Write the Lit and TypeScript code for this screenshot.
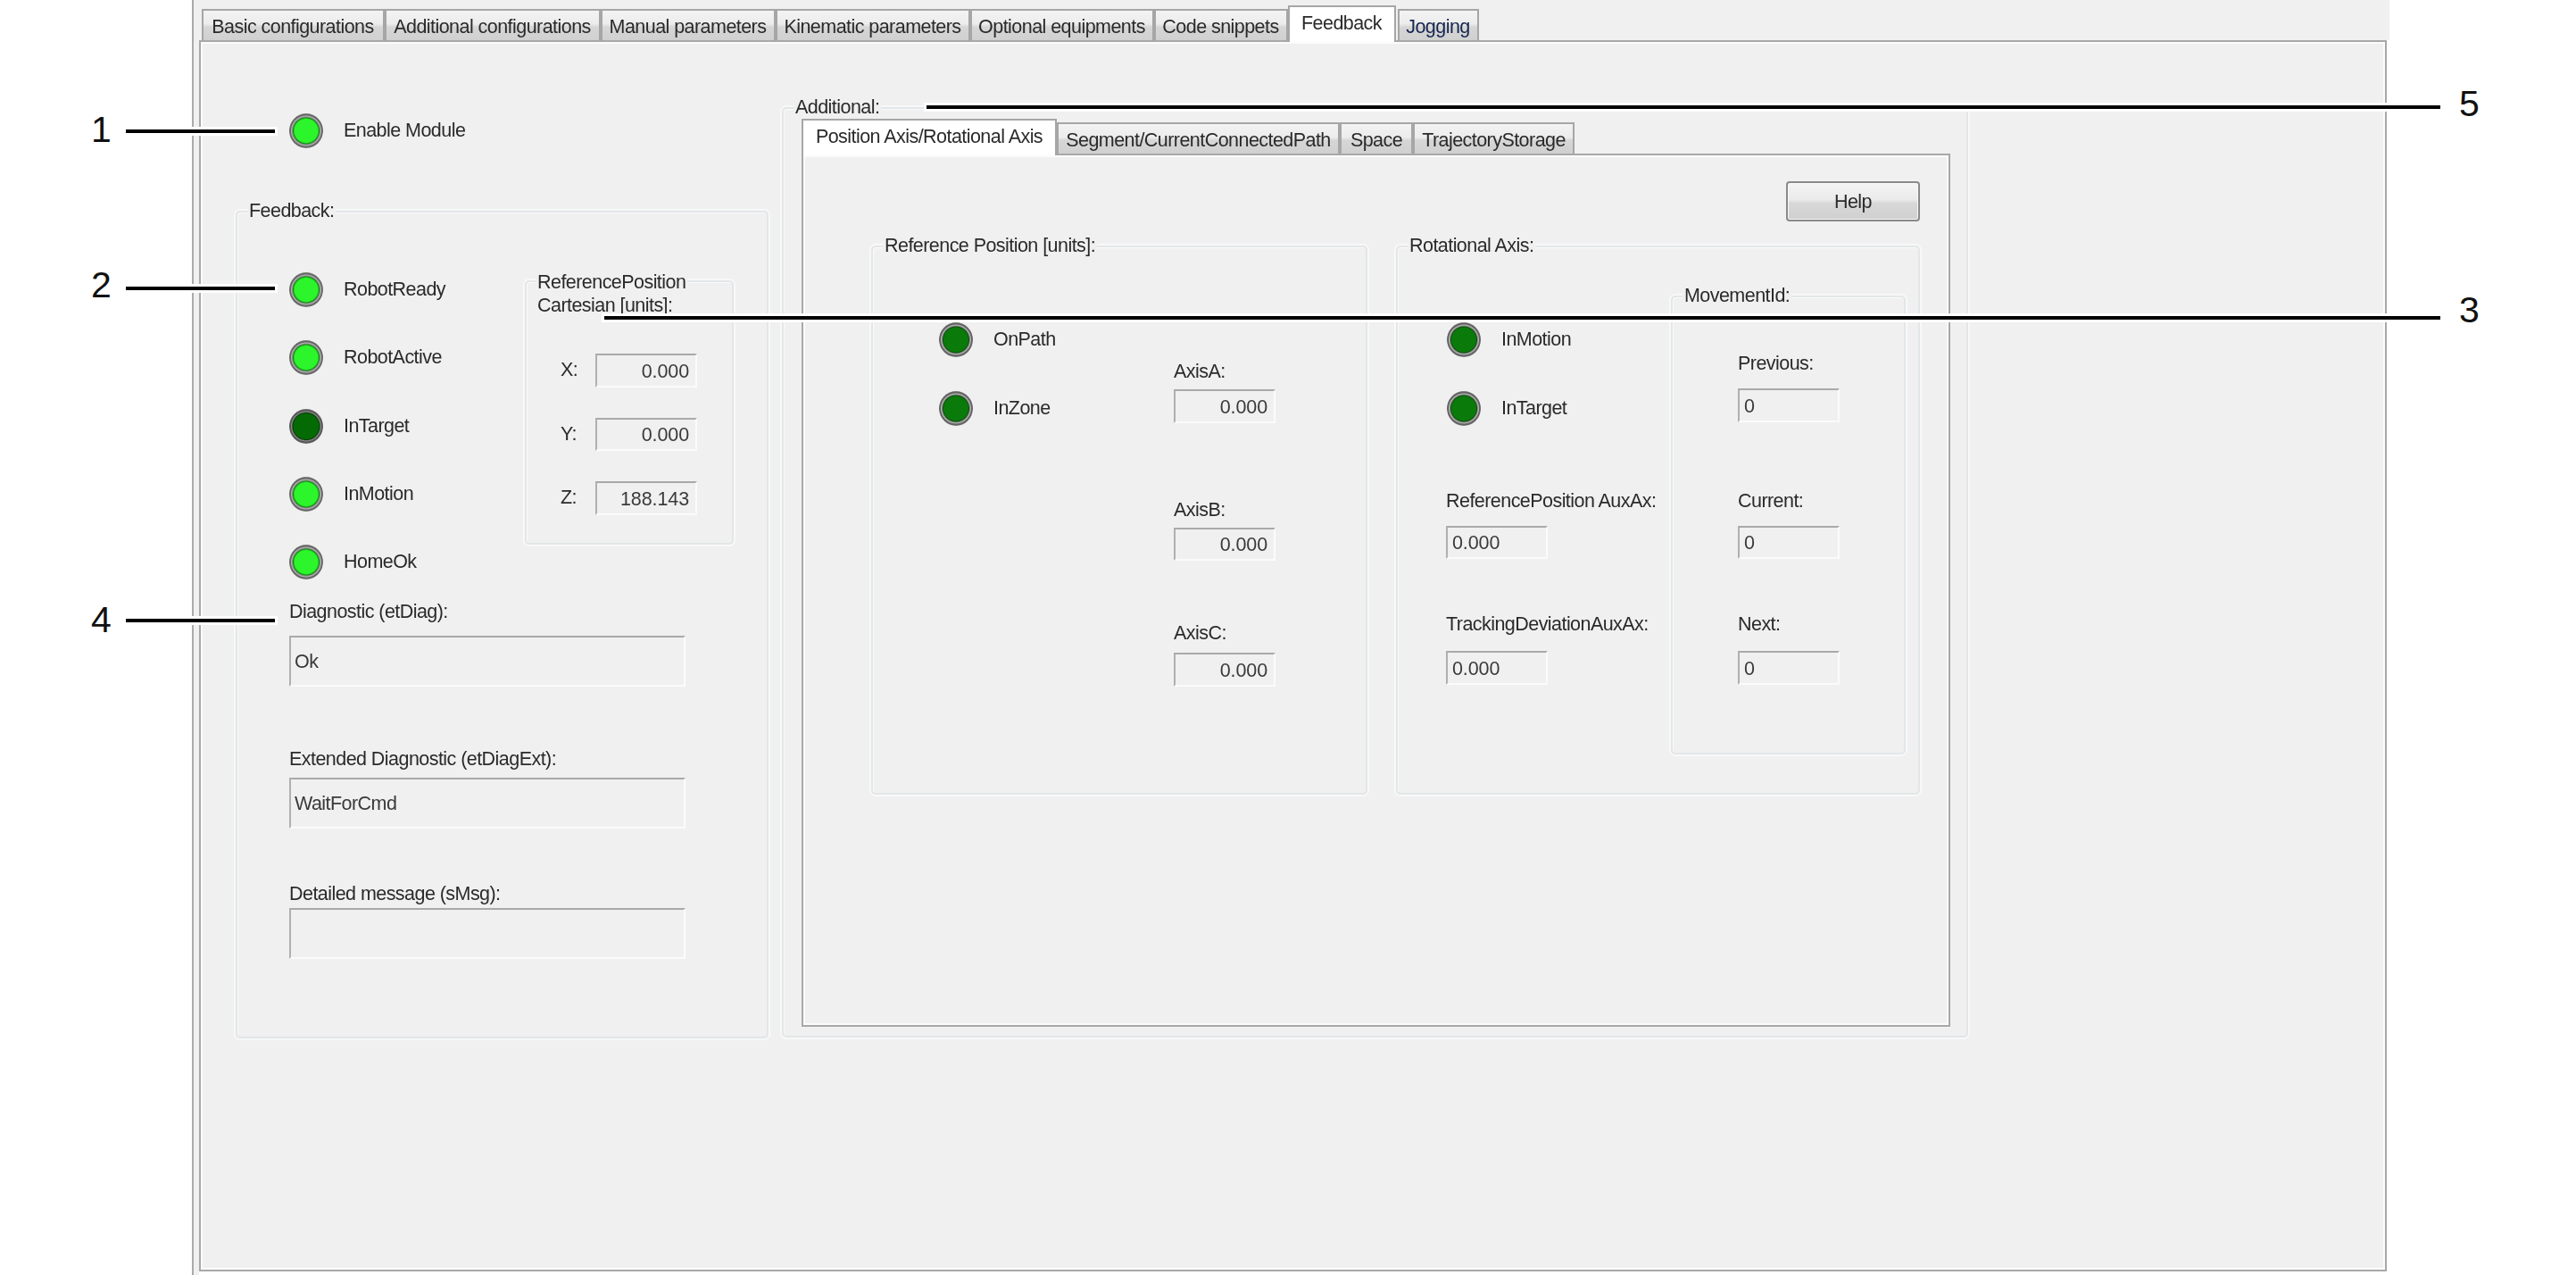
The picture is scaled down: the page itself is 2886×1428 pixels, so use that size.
import { LitElement, html, css } from "lit";
import { customElement } from "lit/decorators.js";

const mainTabs: [string, number, string?][] = [
  ["Basic configurations", 205],
  ["Additional configurations", 242],
  ["Manual parameters", 196],
  ["Kinematic parameters", 218],
  ["Optional equipments", 206],
  ["Code snippets", 150],
  ["Feedback", 121, "on"],
  ["Jogging", 91, "hot"],
];
const subTabs: [string, number, string?][] = [
  ["Position Axis/Rotational Axis", 286, "on"],
  ["Segment/CurrentConnectedPath", 317],
  ["Space", 82],
  ["TrajectoryStorage", 181],
];
const callouts = [
  { n: "1", side: "l", y: 147, cy: 145, x: 141, w: 167 },
  { n: "2", side: "l", y: 323, cy: 319, x: 141, w: 167 },
  { n: "4", side: "l", y: 695, cy: 694, x: 141, w: 167 },
  { n: "3", side: "r", y: 356, cy: 347, x: 677, w: 2057 },
  { n: "5", side: "r", y: 120, cy: 116, x: 1038, w: 1696 },
];

@customElement("app-root")
export class AppRoot extends LitElement {
  static styles = css`
    :host { display: block; position: relative; width: 2886px; height: 1428px; background: #fff; overflow: hidden;
      font-family: "Liberation Sans", Arial, sans-serif; font-size: 21.5px; letter-spacing: -0.55px; color: #2a2a2a; }
    * { box-sizing: border-box; }
    .win { margin-left: 215px; width: 2459px; height: 1428px; border-left: 2px solid #aaa; padding-left: 6px;
      background: linear-gradient(to right, #f0f0f0 6px, #fff 6px); filter: blur(0.55px); }
    .strip { height: 45px; margin: 0 -3px 0 -6px; background: #f0f0f0; padding-left: 8.5px;
      display: flex; align-items: flex-end; position: relative; z-index: 1; }
    .tab { height: 35px; display: flex; align-items: center; justify-content: center; white-space: nowrap;
      border: 2px solid #a6a6a6; border-bottom: none; padding-top: 4px;
      background: linear-gradient(#f3f3f3, #ececec 45%, #d6d6d6 55%, #d0d0d0); position: relative; }
    .tab.on { height: 41px; margin-bottom: -2px; background: #fff; border-bottom: none; z-index: 2; padding-bottom: 6px; margin-right: 2px; }
    .subtabs .tab.on { margin-right: 0; }
    .tab.hot { color: #15264f; }
    .panel { width: 2451px; height: 1379px; border: 2px solid #a8a8a8; background: #f0f0f0; box-shadow: inset -2px -2px 0 #fbfbfb, inset 2px 2px 0 #fbfbfb;
      padding: 73px 0 0 39px; display: flex; gap: 15px; }
    .leftcol { width: 597px; display: flex; flex-direction: column; }
    .enable { margin: 7px 0 70px 60px; }
    .group { border: 2px solid #e3e6e8; border-radius: 5px; box-shadow: 0 0 0 2px #f7f8f8, inset 1px 1px 0 #fafafa; display: flex; flex-direction: column; flex: none; }
    .legend { align-self: flex-start; background: #f0f0f0; padding: 0 2px; height: 26px; line-height: 26px; margin: -15px 0 -13px 11px; white-space: nowrap; position: relative; }
    .ledrow { display: flex; align-items: center; gap: 23px; height: 39px; white-space: nowrap; }
    .led { width: 38px; height: 39px; border-radius: 50%; flex: none;
      background: radial-gradient(circle at 50% 50%, #2cf52c 0 13px, #148a14 14.5px, #8c8c8c 15.5px, #b4b4b4 16.5px, #666 17.5px, #6a6a6a 18.5px, #8a8a8a 19.5px, transparent 20px); }
    .led.dark { background: radial-gradient(circle at 50% 50%, #0a7a0a 0 13.5px, #0c4d0c 14.5px, #8c8c8c 15.5px, #b4b4b4 16.5px, #5f5f5f 17.5px, #666 18.5px, #8a8a8a 19.5px, transparent 20px); }
    .led.dim { background: radial-gradient(circle at 50% 50%, #046a04 0 14px, #053a05 15px, #777 16px, #888 16.5px, #555 17.5px, #5a5a5a 18.5px, #8a8a8a 19.5px, transparent 20px); }
    .lbl { height: 26px; line-height: 26px; white-space: nowrap; }
    .inp { height: 37.5px; width: 114px; background: #f0f0f0; border-style: solid; border-width: 2px; border-color: #a9a9a9 #fbfbfb #fbfbfb #b0b0b0;
      display: flex; align-items: center; padding: 3px 5px 0; color: #3a3a3a; letter-spacing: -0.1px; white-space: nowrap; }
    .inp.num { justify-content: flex-end; padding-right: 7px; }
    .inp.wide { width: 444px; height: 57px; padding: 2px 4px 0; letter-spacing: -0.55px; }

    .fb { width: 597px; height: 927px; padding-left: 58px; }
    .fb > .legend { margin-left: -47px; }
    .fbtop { display: flex; margin-top: 69px; }
    .ledcol { display: flex; flex-direction: column; gap: 37.25px; }
    .fbleds { width: 264px; }
    .cart { width: 234px; height: 296px; margin-top: 9px; }
    .cart .legend { height: 52px; margin: -13px 0 0 10px; }
    .xyz { display: grid; grid-template-columns: 39px 114px; row-gap: 34px; padding: 41px 0 0 38px; align-items: center; }
    .f1 { margin-top: 23px; }
    .f1 .inp { margin-top: 14px; }
    .f2 { margin-top: 68px; }
    .f2 .inp { margin-top: 8px; }
    .f3 { margin-top: 60px; }
    .f3 .inp { margin-top: 3px; }

    .add { width: 1329px; height: 1042px; padding-left: 20px; }
    .add > .legend { margin-left: -9px; }
    .subtabs { display: flex; align-items: flex-end; height: 39px; margin-top: 13px; position: relative; z-index: 1; }
    .subpanel { width: 1287px; height: 978px; border: 2px solid #a8a8a8; background: #f0f0f0; box-shadow: inset -2px -2px 0 #fbfbfb, inset 2px 2px 0 #fbfbfb; padding-top: 29px; }
    .helprow { display: flex; justify-content: flex-end; padding-right: 32px; }
    .help { width: 150px; height: 45px; border: 2px solid #8a8a8a; border-radius: 4px; display: flex; align-items: center; justify-content: center; padding-top: 2px;
      background: linear-gradient(#f4f4f4, #ebebeb 45%, #d8d8d8 55%, #cfcfcf); box-shadow: inset 0 0 0 1px #f8f8f8; }
    .groups { display: flex; gap: 32px; margin-top: 27px; padding-left: 76px; }
    .refpos { width: 556px; height: 615px; }
    .rot { width: 587px; height: 615px; }
    .cols { display: flex; }
    .refleds { margin: 85.5px 0 0 74px; width: 263px; flex: none; gap: 38px; }
    .axes { margin-top: 128px; }
    .axes .inp { margin-top: 7px; }
    .ab { margin-top: 84px; }
    .ac { margin-top: 68px; }
    .ac .inp { margin-top: 9px; }
    .rotleft { width: 306px; flex: none; padding: 85.5px 0 0 54px; }
    .rotleds { gap: 38px; margin-left: 1px; }
    .r1 { margin-top: 71px; }
    .r1 .inp { margin-top: 15px; }
    .r2 { margin-top: 60px; }
    .r2 .inp { margin-top: 17px; }
    .mov { width: 263px; height: 514px; margin-top: 56px; padding-left: 73px; }
    .mov > .legend { margin-left: -62px; }
    .m1 { margin-top: 63px; }
    .m1 .inp { margin-top: 15px; }
    .m2 { margin-top: 75px; }
    .m2 .inp { margin-top: 15px; }
    .m3 { margin-top: 60px; }
    .m3 .inp { margin-top: 17px; }

    .line { position: absolute; height: 4px; background: #000; box-shadow: 0 0 0 3px #fff; z-index: 5; }
    .digit { position: absolute; font-size: 41px; line-height: 46px; height: 46px; letter-spacing: 0; color: #111; z-index: 6; }
    .digit.l { left: 102px; }
    .digit.r { left: 2755px; }
  `;

  private led(text: string, cls = "") {
    return html`<div class="ledrow"><span class="led ${cls}"></span><span>${text}</span></div>`;
  }
  private field(label: string, value: string, cls = "", inp = "") {
    return html`<div class=${cls}><div class="lbl">${label}</div><div class="inp ${inp}">${value}</div></div>`;
  }
  private tabs(list: [string, number, string?][]) {
    return list.map(([t, w, c]) => html`<div class="tab ${c ?? ""}" style="width:${w}px">${t}</div>`);
  }

  render() {
    return html`
      <div class="win">
        <div class="strip">${this.tabs(mainTabs)}</div>
        <div class="panel">
          <div class="leftcol">
            <div class="enable">${this.led("Enable Module")}</div>
            <div class="group fb">
              <div class="legend">Feedback:</div>
              <div class="fbtop">
                <div class="ledcol fbleds">
                  ${this.led("RobotReady")}${this.led("RobotActive")}${this.led("InTarget", "dim")}${this.led("InMotion")}${this.led("HomeOk")}
                </div>
                <div class="group cart">
                  <div class="legend">ReferencePosition<br />Cartesian [units]:</div>
                  <div class="xyz">
                    <div>X:</div><div class="inp num">0.000</div>
                    <div>Y:</div><div class="inp num">0.000</div>
                    <div>Z:</div><div class="inp num">188.143</div>
                  </div>
                </div>
              </div>
              ${this.field("Diagnostic (etDiag):", "Ok", "f1", "wide")}
              ${this.field("Extended Diagnostic (etDiagExt):", "WaitForCmd", "f2", "wide")}
              ${this.field("Detailed message (sMsg):", "", "f3", "wide")}
            </div>
          </div>
          <div class="group add">
            <div class="legend">Additional:</div>
            <div class="subtabs">${this.tabs(subTabs)}</div>
            <div class="subpanel">
              <div class="helprow"><div class="help">Help</div></div>
              <div class="groups">
                <div class="group refpos">
                  <div class="legend">Reference Position [units]:</div>
                  <div class="cols">
                    <div class="ledcol refleds">${this.led("OnPath", "dark")}${this.led("InZone", "dark")}</div>
                    <div class="axes">
                      ${this.field("AxisA:", "0.000", "", "num")}
                      ${this.field("AxisB:", "0.000", "ab", "num")}
                      ${this.field("AxisC:", "0.000", "ac", "num")}
                    </div>
                  </div>
                </div>
                <div class="group rot">
                  <div class="legend">Rotational Axis:</div>
                  <div class="cols">
                    <div class="rotleft">
                      <div class="ledcol rotleds">${this.led("InMotion", "dark")}${this.led("InTarget", "dark")}</div>
                      ${this.field("ReferencePosition AuxAx:", "0.000", "r1")}
                      ${this.field("TrackingDeviationAuxAx:", "0.000", "r2")}
                    </div>
                    <div class="group mov">
                      <div class="legend">MovementId:</div>
                      ${this.field("Previous:", "0", "m1")}
                      ${this.field("Current:", "0", "m2")}
                      ${this.field("Next:", "0", "m3")}
                    </div>
                  </div>
                </div>
              </div>
            </div>
          </div>
        </div>
      </div>
      ${callouts.map(
        (c) => html`
          <div class="line" style="left:${c.x}px;top:${c.y - 2}px;width:${c.w}px"></div>
          <div class="digit ${c.side}" style="top:${c.cy - 23}px">${c.n}</div>
        `
      )}
    `;
  }
}
